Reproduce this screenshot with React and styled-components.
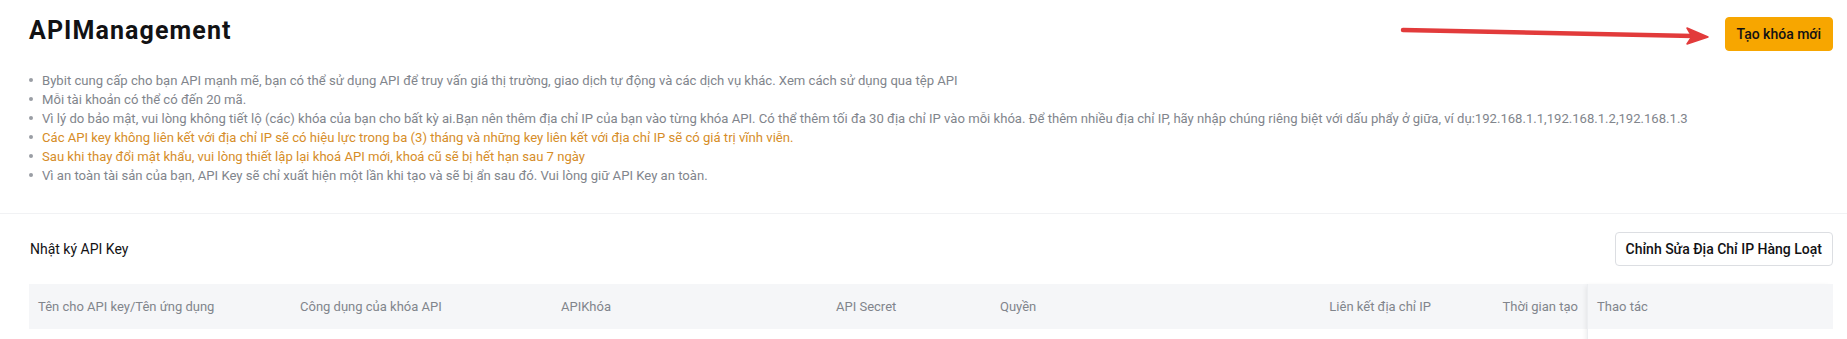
import React from "react";
import styled, { createGlobalStyle } from "styled-components";

const GlobalStyle = createGlobalStyle`
  html, body { margin: 0; padding: 0; background: #ffffff; }
  body {
    font-family: Roboto, "Noto Sans", "Liberation Sans", sans-serif;
    color: #121214;
    -webkit-font-smoothing: antialiased;
  }
  * { box-sizing: border-box; }
`;

const Page = styled.div`
  position: relative;
  width: 100%;
  min-height: 339px;
  overflow: hidden;
`;

const Intro = styled.section`
  padding: 15px 14px 28px 29px;
`;

const TopRow = styled.div`
  display: flex;
  justify-content: space-between;
  align-items: flex-start;
`;

const Title = styled.h1`
  margin: 0;
  font-size: 25px;
  line-height: 32px;
  font-weight: 700;
  color: #121214;
  letter-spacing: 1.1px;
`;

const Button = styled.button`
  height: 34px;
  margin-top: ${(p) => p.$offset || 0}px;
  padding: 0 ${(p) => p.$pad || 16}px;
  border-radius: 4px;
  font-family: inherit;
  font-size: 14px;
  font-weight: 500;
  color: #121214;
  cursor: pointer;
  white-space: nowrap;
  background: ${(p) => (p.$primary ? "#f7a600" : "#ffffff")};
  border: 1px solid ${(p) => (p.$primary ? "#f7a600" : "#dcdee2")};
`;

const Notes = styled.ul`
  list-style: none;
  margin: 20px 0 0;
  padding: 0;
`;

const Note = styled.li`
  display: flex;
  align-items: baseline;
  font-size: 13.1px;
  line-height: 19px;
  color: ${(p) => (p.$warn ? "#d68d28" : "#81858c")};
  white-space: nowrap;

  &::before {
    content: "";
    flex: 0 0 auto;
    width: 4px;
    height: 4px;
    border-radius: 50%;
    background: #9a9ea4;
    margin: 0 9px 0 0;
    transform: translateY(-3px);
  }
`;

const Divider = styled.hr`
  margin: 0;
  border: 0;
  height: 1px;
  background: #f1f2f4;
`;

const LogSection = styled.section`
  padding: 18px 14px 0 29px;
`;

const LogHeader = styled.div`
  display: flex;
  justify-content: space-between;
  align-items: center;
  height: 34px;
  margin-bottom: 18px;
`;

const LogTitle = styled.h2`
  margin: 0 0 0 1px;
  font-size: 14px;
  font-weight: 400;
  color: #121214;
`;

const Table = styled.div`
  display: flex;
`;

const ScrollPart = styled.div`
  flex: 1 1 auto;
  display: grid;
  grid-template-columns: 262px 261px 275px 164px 1fr 148px 147px;
  grid-template-rows: 45px 80px;
`;

const HeadCell = styled.div`
  display: flex;
  align-items: center;
  justify-content: ${(p) => (p.$right ? "flex-end" : "flex-start")};
  padding: 0 9px;
  background: #f5f6f8;
  font-size: 13px;
  color: #81858c;
  white-space: nowrap;
`;

const BodyCell = styled.div`
  grid-column: 1 / -1;
`;

const FixedPart = styled.div`
  flex: 0 0 246px;
  display: grid;
  grid-template-rows: 45px 80px;
  position: relative;
  border-left: 1px solid #eceef1;
  box-shadow: -3px 0 5px -2px rgba(0, 0, 0, 0.08);
`;

const FixedHead = styled(HeadCell)`
  padding-left: 9px;
`;

const ArrowWrap = styled.svg`
  position: absolute;
  left: 1395px;
  top: 21px;
  pointer-events: none;
`;

const notes = [
  { t: "Bybit cung cấp cho bạn API mạnh mẽ, bạn có thể sử dụng API để truy vấn giá thị trường, giao dịch tự động và các dịch vụ khác. Xem cách sử dụng qua tệp API" },
  { t: "Mỗi tài khoản có thể có đến 20 mã." },
  { t: "Vì lý do bảo mật, vui lòng không tiết lộ (các) khóa của bạn cho bất kỳ ai.Bạn nên thêm địa chỉ IP của bạn vào từng khóa API. Có thể thêm tối đa 30 địa chỉ IP vào mỗi khóa. Để thêm nhiều địa chỉ IP, hãy nhập chúng riêng biệt với dấu phẩy ở giữa, ví dụ:192.168.1.1,192.168.1.2,192.168.1.3" },
  { t: "Các API key không liên kết với địa chỉ IP sẽ có hiệu lực trong ba (3) tháng và những key liên kết với địa chỉ IP sẽ có giá trị vĩnh viễn.", warn: true },
  { t: "Sau khi thay đổi mật khẩu, vui lòng thiết lập lại khoá API mới, khoá cũ sẽ bị hết hạn sau 7 ngày", warn: true },
  { t: "Vì an toàn tài sản của bạn, API Key sẽ chỉ xuất hiện một lần khi tạo và sẽ bị ẩn sau đó. Vui lòng giữ API Key an toàn." },
];

const columns = [
  { label: "Tên cho API key/Tên ứng dụng" },
  { label: "Công dụng của khóa API" },
  { label: "APIKhóa" },
  { label: "API Secret" },
  { label: "Quyền" },
  { label: "Liên kết địa chỉ IP", right: true },
  { label: "Thời gian tạo", right: true },
];

function Arrow() {
  return (
    <ArrowWrap width="325" height="32" viewBox="0 0 325 32">
      <line x1="8" y1="9" x2="298" y2="15" stroke="#e23b3b" strokeWidth="4.5" strokeLinecap="round" />
      <polygon points="313,16 292,7 297,15.5 292,23" fill="#e23b3b" stroke="#e23b3b" strokeWidth="1.5" strokeLinejoin="round" />
    </ArrowWrap>
  );
}

export default function App() {
  return (
    <>
      <GlobalStyle />
      <Page>
        <Intro>
          <TopRow>
            <Title>APIManagement</Title>
            <Button $primary $offset={2} $pad={11}>Tạo khóa mới</Button>
          </TopRow>
          <Notes>
            {notes.map((n, i) => (
              <Note key={i} $warn={n.warn}>{n.t}</Note>
            ))}
          </Notes>
        </Intro>
        <Divider />
        <LogSection>
          <LogHeader>
            <LogTitle>Nhật ký API Key</LogTitle>
            <Button $pad={10}>Chỉnh Sửa Địa Chỉ IP Hàng Loạt</Button>
          </LogHeader>
          <Table>
            <ScrollPart>
              {columns.map((c) => (
                <HeadCell key={c.label} $right={c.right}>{c.label}</HeadCell>
              ))}
              <BodyCell />
            </ScrollPart>
            <FixedPart>
              <FixedHead>Thao tác</FixedHead>
              <div />
            </FixedPart>
          </Table>
        </LogSection>
        <Arrow />
      </Page>
    </>
  );
}
